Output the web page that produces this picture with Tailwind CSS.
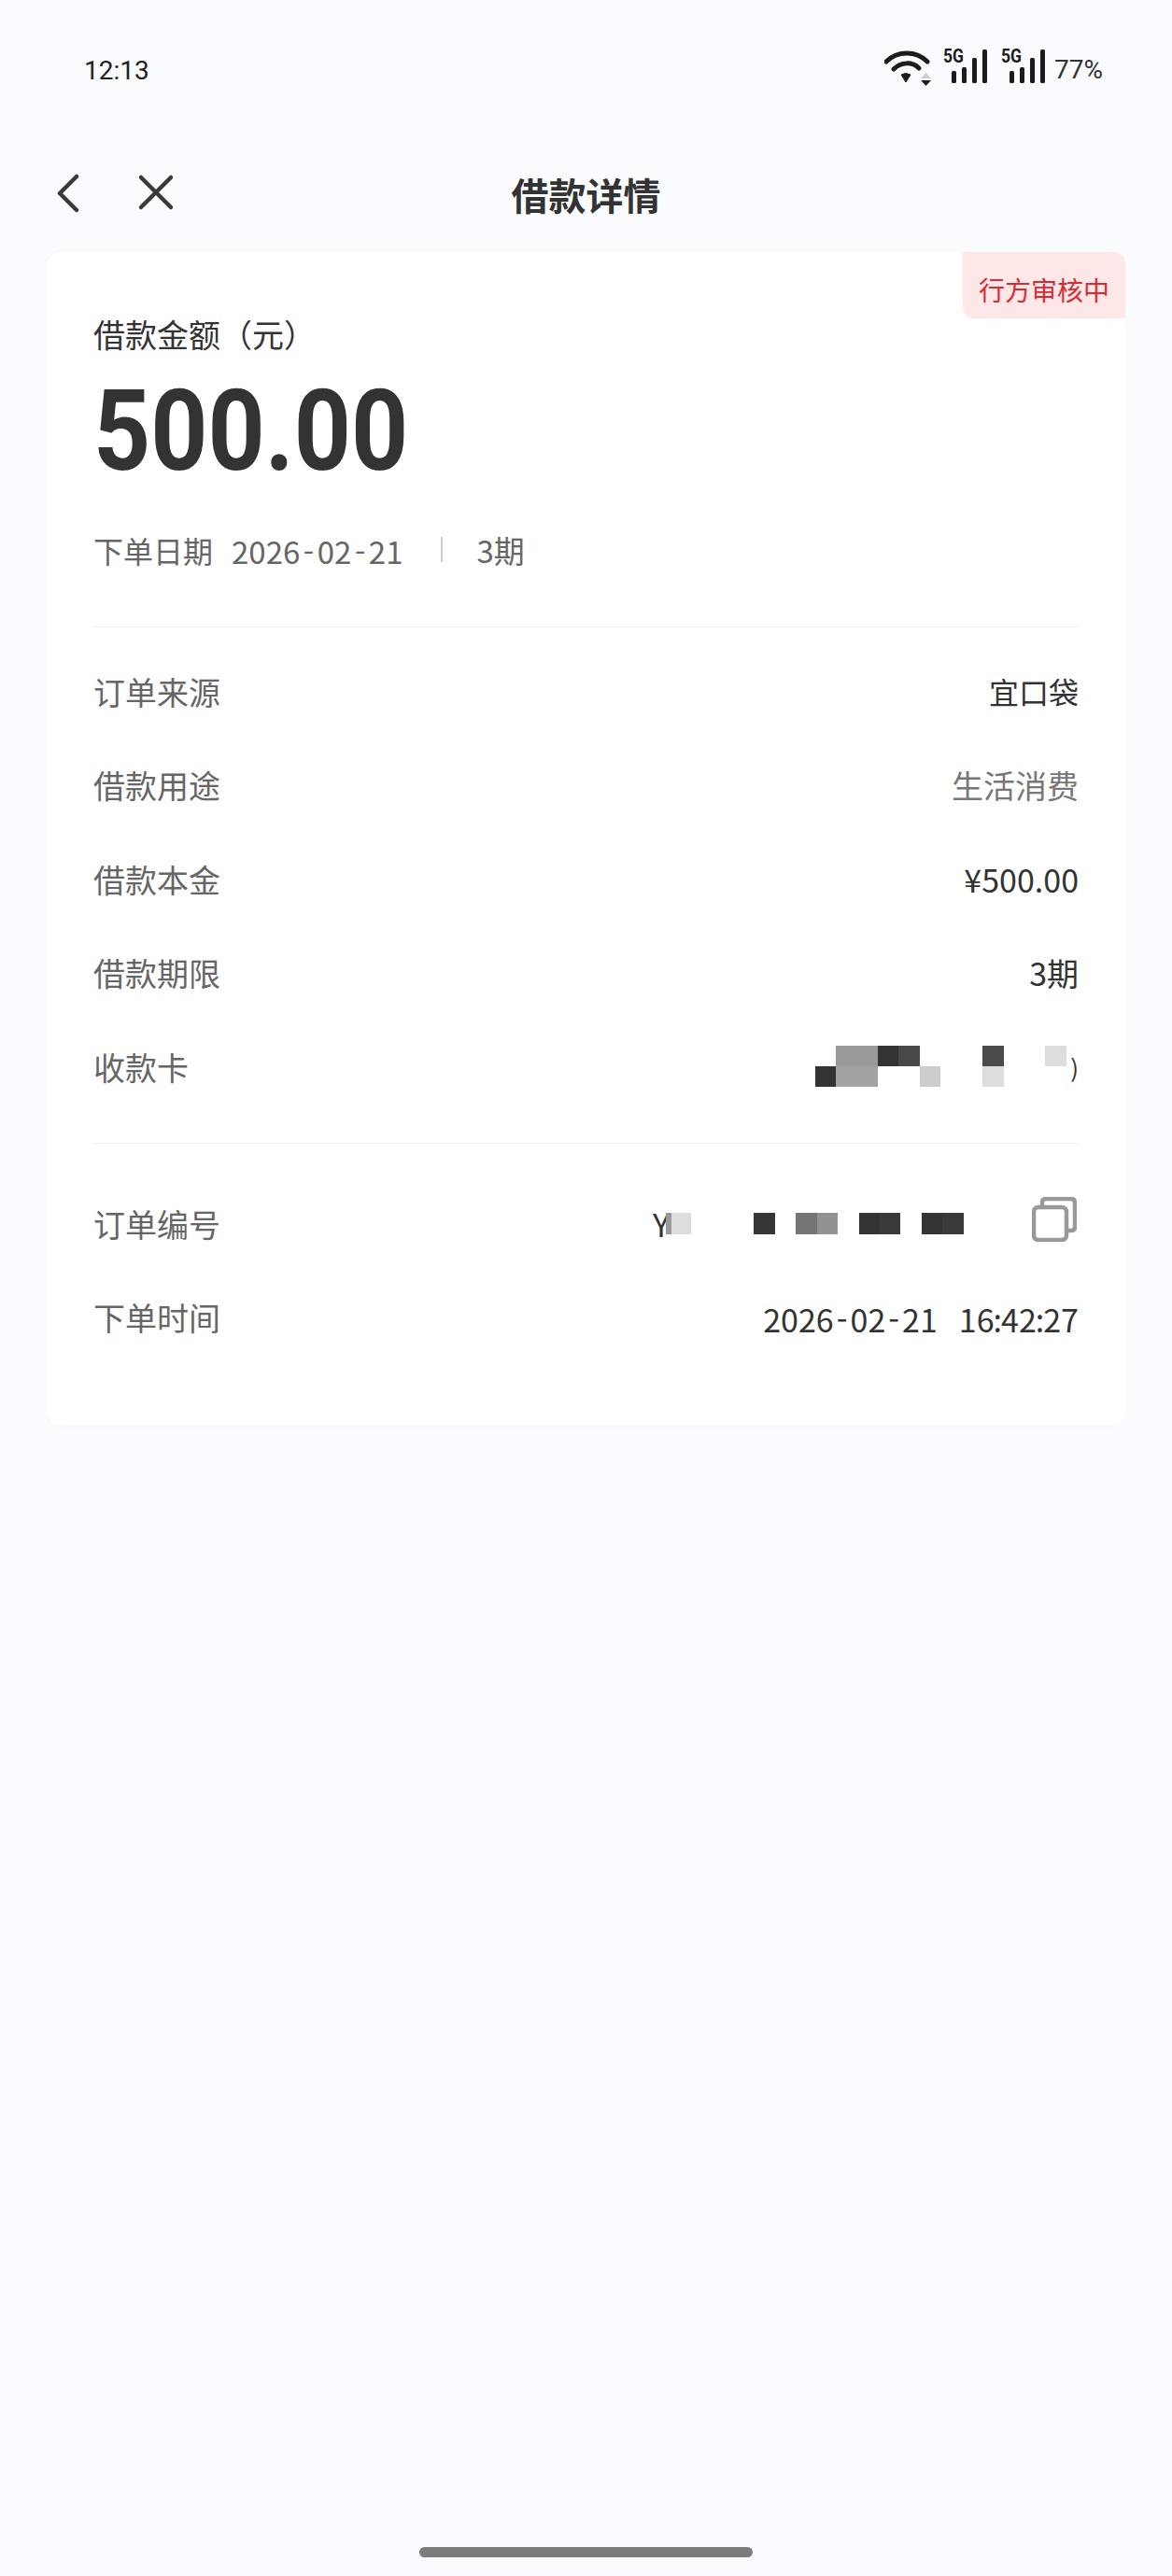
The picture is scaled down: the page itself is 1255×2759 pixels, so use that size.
<!DOCTYPE html>
<html lang="zh-CN">
<head>
    <meta charset="UTF-8" />
    <meta name="viewport" content="width=device-width, initial-scale=1.0"/>
    <title>借款详情</title>
    <script src="https://cdn.jsdelivr.net/npm/@tailwindcss/browser@4"></script>
</head>
<body class="bg-[#fafbff] text-[#333] font-['Noto_Sans_CJK_SC',sans-serif]">
<div class="w-[1255px] h-[2759px] flex flex-col overflow-hidden">

    <!-- Status bar -->
    <div class="h-[140px] flex justify-between pl-[90px] pr-[74px] pt-[45px] font-['Roboto',sans-serif]">
        <span class="pt-[8px] text-[28px] leading-[46px] text-[#222]">12:13</span>
        <div class="flex items-start">
            <svg width="50" height="50" viewBox="0 -8 50 50" fill="none">
                <path d="M2 13 C14 1 34 1 46 13" stroke="#1c1c1c" stroke-width="5" stroke-linecap="round"/>
                <path d="M10 21 C18 13 30 13 37 20" stroke="#1c1c1c" stroke-width="5" stroke-linecap="round"/>
                <path d="M18 27 Q23 24 28 27 L23 35 Z" fill="#1c1c1c" stroke="#1c1c1c" stroke-linejoin="round"/>
                <path d="M39 31 L44.500 25 L50 31 Z" fill="#ccc"/>
                <path d="M39 33 L50 33 L44.500 39 Z" fill="#1c1c1c"/>
            </svg>
            <svg class="ml-[13px]" width="48" height="50" viewBox="0 -8 48 50" fill="#1c1c1c">
                <text x="0" y="14" font-family="Roboto" font-weight="700" font-size="20" textLength="22" lengthAdjust="spacingAndGlyphs">5G</text>
                <rect x="9" y="23" width="5" height="13" rx="1.500"/>
                <rect x="20" y="19" width="5" height="17" rx="1.500"/>
                <rect x="31" y="9" width="5" height="27" rx="1.500"/>
                <rect x="42" y="0" width="5" height="36" rx="1.500"/>
            </svg>
            <svg class="ml-[14px]" width="48" height="50" viewBox="0 -8 48 50" fill="#1c1c1c">
                <text x="0" y="14" font-family="Roboto" font-weight="700" font-size="20" textLength="22" lengthAdjust="spacingAndGlyphs">5G</text>
                <rect x="9" y="23" width="5" height="13" rx="1.500"/>
                <rect x="20" y="19" width="5" height="17" rx="1.500"/>
                <rect x="31" y="9" width="5" height="27" rx="1.500"/>
                <rect x="42" y="0" width="5" height="36" rx="1.500"/>
            </svg>
            <span class="ml-[9px] mt-[11px] text-[28px] leading-[38px] text-[#333]">77%</span>
        </div>
    </div>

    <!-- Nav -->
    <div class="relative h-[130px] flex items-center pl-[61px]">
        <svg class="mt-[3px]" width="24" height="42" viewBox="0 0 24 42" fill="none" stroke="#3a3a3a" stroke-width="4.500" stroke-linecap="round" stroke-linejoin="round">
            <path d="M21 3 L3 21 L21 39"/>
        </svg>
        <svg class="ml-[62px] mt-[2px]" width="40" height="40" viewBox="0 0 40 40" fill="none" stroke="#3a3a3a" stroke-width="4.500" stroke-linecap="round">
            <path d="M4 4 L36 36 M36 4 L4 36"/>
        </svg>
        <h1 class="absolute inset-x-0 top-[38px] text-center text-[40px] leading-[60px] font-bold text-[#333]">借款详情</h1>
    </div>

    <!-- Card -->
    <div class="relative mx-[50px] h-[1257px] bg-white rounded-[16px] shadow-[0_0_12px_rgba(0,0,0,0.015)] px-[50px]">
        <div class="absolute right-0 top-0 w-[174px] h-[71px] pt-[8px] bg-[#fde7e7] rounded-tr-[12px] rounded-bl-[12px] flex items-center justify-center text-[28px] text-[#d92b35]">行方审核中</div>

        <p class="pt-[63px] text-[34px] leading-[50px] text-[#333]">借款金额（元）</p>
        <p class="mt-[12px] h-[134px] font-['Roboto',sans-serif] font-bold text-[120px] leading-[134px] text-[#333] origin-left scale-x-[0.89]">500.00</p>
        <div class="mt-[34px] flex items-center text-[32px] leading-[48px] text-[#666]">
            <span>下单日期</span>
            <span class="ml-[20px] text-[33px]">2026<span class="mx-[3.500px] align-[3px]">-</span>02<span class="mx-[3.500px] align-[3px]">-</span>21</span>
            <span class="ml-[41px] w-[2px] h-[27px] bg-[#ccc]"></span>
            <span class="ml-[36px] text-[33px]">3期</span>
        </div>

        <div class="mt-[57px] h-[1px] bg-[#f0f0f0]"></div>

        <div class="pt-[18px] flex flex-col text-[34px]">
            <div class="h-[100.500px] flex items-center justify-between">
                <span class="text-[#666]">订单来源</span><span class="text-[32px] text-[#333]">宜口袋</span>
            </div>
            <div class="h-[100.500px] flex items-center justify-between">
                <span class="text-[#666]">借款用途</span><span class="text-[#777]">生活消费</span>
            </div>
            <div class="h-[100.500px] flex items-center justify-between">
                <span class="text-[#666]">借款本金</span><span class="text-[#333]">¥500.00</span>
            </div>
            <div class="h-[100.500px] flex items-center justify-between">
                <span class="text-[#666]">借款期限</span><span class="text-[#333]">3期</span>
            </div>
            <div class="h-[100.500px] flex items-center justify-between">
                <span class="text-[#666]">收款卡</span>
                <span class="flex items-center text-[#333]">
                    <svg width="270" height="44" viewBox="874 1122 270 44">
                        <rect x="896" y="1122" width="45" height="22" fill="#999"/>
                        <rect x="941" y="1122" width="22" height="22" fill="#333"/>
                        <rect x="963" y="1122" width="23" height="22" fill="#484848"/>
                        <rect x="1053" y="1122" width="23" height="22" fill="#4a4a4a"/>
                        <rect x="1120" y="1122" width="23" height="22" fill="#ddd"/>
                        <rect x="874" y="1144" width="22" height="22" fill="#333"/>
                        <rect x="896" y="1144" width="45" height="22" fill="#a3a3a3"/>
                        <rect x="986" y="1144" width="22" height="22" fill="#ccc"/>
                        <rect x="1053" y="1144" width="23" height="22" fill="#ddd"/>
                    </svg>
                    <span class="ml-[3px] text-[26px]">)</span>
                </span>
            </div>
        </div>

        <div class="mt-[31px] h-[1px] bg-[#f0f0f0]"></div>

        <div class="pt-[36px] flex flex-col text-[34px]">
            <div class="h-[100px] flex items-center justify-between">
                <span class="text-[#666]">订单编号</span>
                <span class="flex items-center">
                    <span class="text-[#333] leading-[46px]">Y</span>
                    <svg class="-ml-[4px]" width="319" height="23" viewBox="712 1301 319 23">
                        <rect x="712" y="1301" width="6" height="23" fill="#999"/>
                        <rect x="718" y="1301" width="21" height="23" fill="#ddd"/>
                        <rect x="806" y="1301" width="23" height="23" fill="#363636"/>
                        <rect x="851" y="1301" width="23" height="23" fill="#757575"/>
                        <rect x="874" y="1301" width="22" height="23" fill="#929292"/>
                        <rect x="919" y="1301" width="22" height="23" fill="#333"/>
                        <rect x="941" y="1301" width="22" height="23" fill="#3a3a3a"/>
                        <rect x="986" y="1301" width="22" height="23" fill="#333"/>
                        <rect x="1008" y="1301" width="23" height="23" fill="#3a3a3a"/>
                    </svg>
                    <svg class="ml-[73px] -mt-[10px] mr-[2px]" width="48" height="48" viewBox="0 0 48 48" fill="none" stroke="#999" stroke-width="4.500">
                        <path d="M11 9 V6 Q11 2 15 2 H42 Q46 2 46 6 V32 Q46 36 42 36 H38"/>
                        <rect x="2" y="11" width="35" height="35" rx="5"/>
                    </svg>
                </span>
            </div>
            <div class="h-[100px] flex items-center justify-between">
                <span class="text-[#666]">下单时间</span>
                <span class="flex items-baseline text-[#333]">
                    <span>2026<span class="mx-[3px] align-[3px]">-</span>02<span class="mx-[3px] align-[3px]">-</span>21</span>
                    <span class="ml-[23px]">16<span class="-mx-[1px]">:</span>42<span class="-mx-[1px]">:</span>27</span>
                </span>
            </div>
        </div>
    </div>

    <!-- Home indicator -->
    <div class="mt-auto mb-[20px] mx-auto w-[357px] h-[11px] rounded-full bg-[#7c7c7c]"></div>
</div>
</body>
</html>
